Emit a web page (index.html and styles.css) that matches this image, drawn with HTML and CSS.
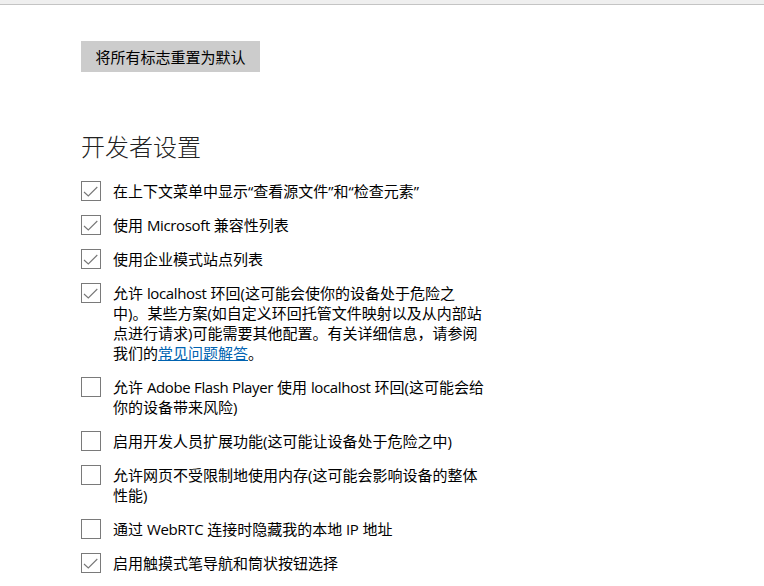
FILE: index.html
```html
<!DOCTYPE html>
<html lang="zh-CN">
<head>
<meta charset="utf-8">
<title>开发者设置</title>
<link rel="stylesheet" href="styles.css">
</head>
<body>
<div class="topbar"></div>
<main class="content">
  <button class="reset">将所有标志重置为默认</button>
  <h2 class="title">开发者设置</h2>
  <ul class="opts">
    <li class="opt"><span class="box checked"><svg viewBox="0 0 20 20"><path d="M3 11 L7.3 15 L16.3 6"/></svg></span><span class="label">在上下文菜单中显示“查看源文件”和“检查元素”</span></li>
    <li class="opt"><span class="box checked"><svg viewBox="0 0 20 20"><path d="M3 11 L7.3 15 L16.3 6"/></svg></span><span class="label">使用 <span class="en">Microsoft</span> 兼容性列表</span></li>
    <li class="opt"><span class="box checked"><svg viewBox="0 0 20 20"><path d="M3 11 L7.3 15 L16.3 6"/></svg></span><span class="label">使用企业模式站点列表</span></li>
    <li class="opt"><span class="box checked"><svg viewBox="0 0 20 20"><path d="M3 11 L7.3 15 L16.3 6"/></svg></span><span class="label">允许 <span class="en">localhost</span> 环回(这可能会使你的设备处于危险之中)。某些方案(如自定义环回托管文件映射以及从内部站点进行请求)可能需要其他配置。有关详细信息，请参阅我们的<a class="link" href="#">常见问题解答</a>。</span></li>
    <li class="opt"><span class="box"></span><span class="label">允许 <span class="en">Adobe Flash Player</span> 使用 <span class="en">localhost</span> 环回(这可能会给你的设备带来风险)</span></li>
    <li class="opt"><span class="box"></span><span class="label">启用开发人员扩展功能(这可能让设备处于危险之中)</span></li>
    <li class="opt"><span class="box"></span><span class="label">允许网页不受限制地使用内存(这可能会影响设备的整体性能)</span></li>
    <li class="opt"><span class="box"></span><span class="label">通过 <span class="en">WebRTC</span> 连接时隐藏我的本地 <span class="en">IP</span> 地址</span></li>
    <li class="opt"><span class="box checked"><svg viewBox="0 0 20 20"><path d="M3 11 L7.3 15 L16.3 6"/></svg></span><span class="label">启用触摸式笔导航和筒状按钮选择</span></li>
  </ul>
</main>
</body>
</html>
```
FILE: styles.css
```css
html, body {
  margin: 0;
  padding: 0;
  background: #ffffff;
}
body {
  font-family: "Open Sans", "Noto Sans CJK SC", sans-serif;
  color: #000;
}
.topbar {
  height: 4px;
  background: #efefef;
  border-bottom: 1px solid #c4c4c4;
}
.content {
  padding-left: 81px;
  padding-top: 36px;
}
.reset {
  display: block;
  margin: 0;
  border: 0;
  background: #cccccc;
  height: 31px;
  width: 179px;
  padding: 0;
  font-family: "Noto Sans CJK SC", sans-serif;
  font-size: 15px;
  color: #000;
  line-height: 31px;
}
.title {
  margin: 58px 0 0 0;
  font-family: "Noto Sans CJK SC", sans-serif;
  font-weight: 300;
  font-size: 24px;
  line-height: 32px;
  color: #222;
}
.opts {
  list-style: none;
  margin: 19px 0 0 0;
  padding: 0;
}
.opt {
  display: flex;
  gap: 12px;
  margin-bottom: 14px;
}
.box {
  flex: none;
  width: 20px;
  height: 20px;
  box-sizing: border-box;
  border: 1px solid #7a7a7a;
  position: relative;
}
.box svg {
  position: absolute;
  left: -1px;
  top: -1px;
  width: 20px;
  height: 20px;
}
.box svg path {
  fill: none;
  stroke: #777;
  stroke-width: 1.1;
}
.label {
  width: 375px;
  font-size: 15px;
  line-height: 20px;
}
.en {
  letter-spacing: -0.35px;
}
.link {
  color: #0063b1;
  text-decoration: underline;
}
```
